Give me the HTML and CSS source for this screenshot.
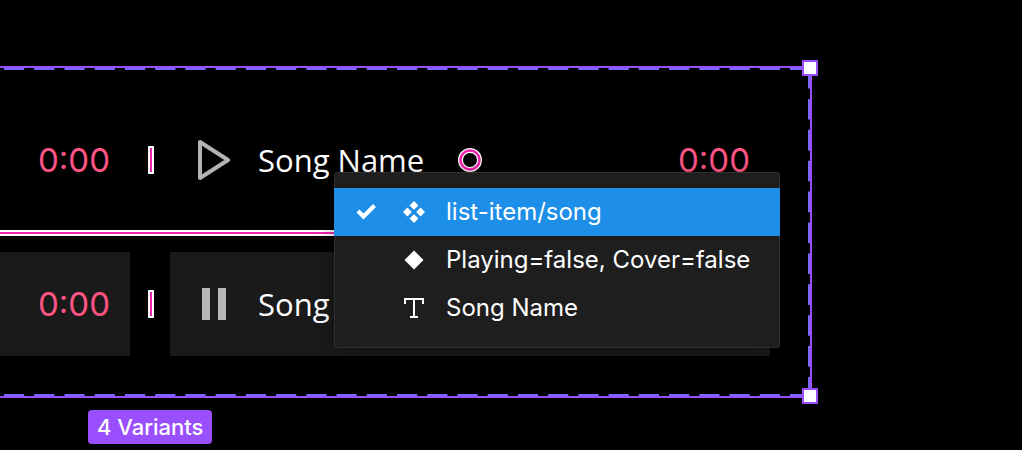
FILE: index.html
```
<!DOCTYPE html>
<html lang="en">

<head>
    <meta charset="utf-8">
    <title>list-item/song</title>
    <meta name="viewport" content="width=device-width,initial-scale=1">
    <link rel="stylesheet" href="styles.css">
</head>

<body>
    <main class="canvas">
        <section class="variants">
            <!-- dashed component set outline -->
            <svg class="dashes" aria-hidden="true">
                <line x1="4" y1="1" x2="100%" y2="1" />
                <line x1="4" y1="100%" x2="100%" y2="100%" transform="translate(0 -1)" />
                <line class="side" x1="100%" y1="0" x2="100%" y2="100%" transform="translate(-1 0)" />
            </svg>
            <span class="handle handle-top"></span>
            <span class="handle handle-bottom"></span>

            <div class="row">
                <div class="item item-left"><span class="time">0:00</span></div>
                <div class="gap"><span class="grip"></span></div>
                <div class="item item-main">
                    <button class="icon-btn" type="button" aria-label="Play">
                        <svg width="36" height="44" viewBox="0 0 36 44"><path d="M6 4V40L34 22Z" fill="none" stroke="#b3b3b3" stroke-width="4" stroke-linejoin="round" /></svg>
                    </button>
                    <span class="song">Song Name</span>
                    <svg class="ring" width="24" height="24" viewBox="0 0 24 24">
                        <circle cx="12" cy="12" r="9.500" fill="none" stroke="#fff" stroke-width="5" />
                        <circle cx="12" cy="12" r="9.500" fill="none" stroke="#f024ae" stroke-width="2.500" />
                    </svg>
                    <span class="time">0:00</span>

                    <div class="menu" role="menu">
                        <button class="menu-item selected" type="button" role="menuitemradio" aria-checked="true">
                            <svg class="check" width="24" height="24" viewBox="0 0 24 24"><path d="M4 11L9.500 16.500L20.500 5.500" fill="none" stroke="#fff" stroke-width="4.200" /></svg>
                            <svg class="type" width="24" height="24" viewBox="0 0 24 24"><path d="M12 1L16.400 5.400L12 9.800L7.600 5.400ZM12 14.200L16.400 18.600L12 23L7.600 18.600ZM5.400 7.600L9.800 12L5.400 16.400L1 12ZM18.600 7.600L23 12L18.600 16.400L14.200 12Z" fill="#fff" /></svg>
                            <span>list-item/song</span>
                        </button>
                        <button class="menu-item" type="button" role="menuitemradio" aria-checked="false">
                            <svg class="type" width="24" height="24" viewBox="0 0 24 24"><path d="M12 2.500L21.500 12L12 21.500L2.500 12Z" fill="#fff" /></svg>
                            <span>Playing=false, Cover=false</span>
                        </button>
                        <button class="menu-item" type="button" role="menuitemradio" aria-checked="false">
                            <svg class="type" width="24" height="24" viewBox="0 0 24 24"><path d="M3 8V3H21V8M12 3V21M8 21H16" fill="none" stroke="#fff" stroke-width="2" /></svg>
                            <span>Song Name</span>
                        </button>
                    </div>
                </div>
            </div>

            <div class="row-gap"><span class="bar"></span></div>

            <div class="row row-playing">
                <div class="item item-left"><span class="time">0:00</span></div>
                <div class="gap"><span class="grip"></span></div>
                <div class="item item-main">
                    <button class="icon-btn" type="button" aria-label="Pause">
                        <svg width="36" height="44" viewBox="0 0 36 44"><path d="M8 6h8v32h-8zM24 6h8v32h-8z" fill="#b8b8b8" /></svg>
                    </button>
                    <span class="song">Song</span>
                </div>
            </div>
        </section>
        <span class="badge">4 Variants</span>
    </main>
</body>

</html>
```
FILE: styles.css
```
* { box-sizing:border-box; margin:0; padding:0 }
body { background:#000; color:#fff; font-family:Inter,"Liberation Sans",sans-serif }
button { border:0; background:none; color:inherit; font:inherit; cursor:pointer }
svg { display:block; flex:none }

.canvas { padding-top:66px }
.variants { position:relative; margin-right:210px; padding:40px 40px 40px 0; border:2px solid #9a4fff; border-left:0 }
.dashes { position:absolute; top:0; left:0; width:100%; height:100% }
.dashes line { stroke:#7868ff; stroke-width:2; stroke-dasharray:20.2 10.03 }
.dashes .side { stroke-dasharray:20.6 10.3 }
.handle { position:absolute; right:-8px; width:16px; height:16px; background:#fff; border:2px solid #9a4fff }
.handle-top { top:-8px }
.handle-bottom { bottom:-8px }

.row { display:flex; height:104px }
.item { display:flex; align-items:center }
.item-left { flex:1; justify-content:flex-end; padding-right:20px }
.item-main { position:relative; width:600px; padding:0 20px }
.row-playing .item { background:#1a1a1a }
.gap { display:flex; align-items:center; justify-content:center; width:40px; padding-left:2px }
.grip { width:6px; height:28px; background:#f024ae; border:2px solid #fff }
.row-gap { display:flex; align-items:center; height:40px; padding-top:2px }
.bar { width:50%; height:6px; background:#f024ae; border:2px solid #fff; border-left:0 }

.time { color:#ff5485; font-size:33px; line-height:40px }
.icon-btn { margin:0 28px 0 4px }
.song { font-family:"Open Sans",sans-serif; font-size:31px; line-height:40px; white-space:nowrap }
.ring { margin-left:34px }
.item-main .time { margin-left:auto }

/* context menu over the songs */
.menu { position:absolute; z-index:1; top:64px; left:164px; width:446px; padding:16px 0; background:#1e1e1e; border-radius:4px; box-shadow:inset 0 0 0 1px #303030,0 4px 20px rgba(0,0,0,.3) }
.menu-item { display:flex; align-items:center; width:100%; height:48px; padding-left:20px; font-size:24px; line-height:32px; text-align:left; white-space:nowrap }
.selected { background:#1e8fe8 }
.type { margin:0 20px 0 48px }
.check + .type { margin-left:24px }

.badge { display:inline-block; margin:12px 0 0 88px; padding:2px 9px; background:#9a4fff; border-radius:4px; font-size:22px; font-weight:500; line-height:30px }
```
